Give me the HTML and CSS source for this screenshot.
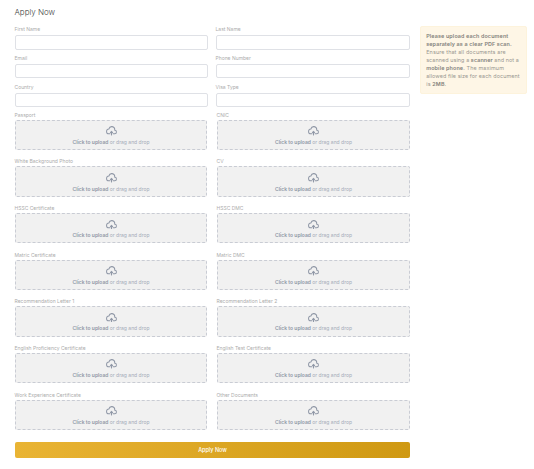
FILE: index.html
```
<!DOCTYPE html>
<html lang="en">
<head>
<meta charset="utf-8">
<title>Apply Now</title>
<link rel="stylesheet" href="styles.css">
</head>
<body>
<main class="page">
  <form class="form">
    <h1 class="title">Apply Now</h1>
    <div class="fields" id="fields"></div>
    <div class="uploads" id="uploads"></div>
    <button class="submit" type="button">Apply Now</button>
  </form>
  <aside class="note"><b>Please upload each document<br>separately as a clear PDF scan.</b><br>Ensure that all documents are<br><span class="tight">scanned using a <b>scanner</b> and not a</span><br><b>mobile phone</b>. The maximum<br><span class="tight">allowed file size for each document</span><br>is <b>2MB</b>.</aside>
</main>
<script src="script.js"></script>
</body>
</html>
```
FILE: styles.css
```
* { box-sizing: border-box; }
body {
  margin: 0;
  background: #fff;
  font-family: Inter, "Liberation Sans", sans-serif;
  font-size: 5px;
  overflow: hidden;
}
.page {
  display: flex;
  align-items: flex-start;
  gap: 10px;
  padding: 7px 7px 0 15px;
}
.form { width: 395px; }
.title {
  margin: 0 0 0 -0.5px;
  height: 19px;
  font-size: 8px;
  line-height: 11px;
  font-weight: 300;
  letter-spacing: -0.03px;
  color: #444;
}
.fields {
  display: grid;
  grid-template-columns: 193px 194px;
  column-gap: 8px;
  grid-template-rows: 28.6px 29px 28.6px;
}
.label {
  display: block;
  height: 7px;
  margin-left: -0.5px;
  line-height: 7px;
  color: #acacac;
  white-space: nowrap;
}
.input {
  display: block;
  width: 100%;
  height: 14.5px;
  margin-top: 2px;
  padding: 0 4px;
  border: 1px solid #dfe1e6;
  border-radius: 2px;
  background: #fff;
}
.uploads {
  display: grid;
  grid-template-columns: 192px 193px;
  column-gap: 10px;
  grid-auto-rows: 46.65px;
  margin-top: -0.5px;
}
.drop {
  display: flex;
  flex-direction: column;
  align-items: center;
  height: 30.3px;
  margin-top: 1.1px;
  padding-top: 5.5px;
  border: 1px dashed #c9ccd4;
  border-radius: 2px;
  background: #f1f1f1;
  color: #a4abb8;
  line-height: 7px;
  white-space: nowrap;
}
.cloud {
  display: block;
  width: 11px;
  height: 9.6px;
  margin-bottom: 3px;
  fill: none;
  stroke: #8f97a6;
  stroke-width: 1.8;
  stroke-linecap: round;
  stroke-linejoin: round;
}
.drop b { font-weight: 600; color: #8f97a6; }
.submit {
  display: block;
  width: 100%;
  height: 16px;
  margin-top: 4.3px;
  padding: 0;
  border: 0;
  border-radius: 2px;
  background: linear-gradient(90deg, #e9b434, #cf9913);
  color: #fff;
  font: 500 5.5px/16px Inter, "Liberation Sans", sans-serif;
}
.note {
  width: 107px;
  height: 68px;
  margin-top: 19px;
  padding: 5px 0 0 5.2px;
  border: 1px solid #fdf3dc;
  border-radius: 2px;
  background: #fef6e6;
  color: #999791;
  font-size: 5.4px;
  line-height: 8px;
  letter-spacing: 0.14px;
  white-space: nowrap;
}
.note b { font-weight: 600; color: #84827c; }
.tight { letter-spacing: 0.09px; }
```
FILE: script.js
```
const fields = ["First Name", "Last Name", "Email", "Phone Number", "Country", "Visa Type"];
const uploads = [
  "Passport", "CNIC", "White Background Photo", "CV", "HSSC Certificate", "HSSC DMC",
  "Matric Certificate", "Matric DMC", "Recommendation Letter 1", "Recommendation Letter 2",
  "English Proficiency Certificate", "English Test Certificate", "Work Experience Certificate", "Other Documents"
];
document.getElementById("fields").innerHTML = fields.map(name =>
  `<label><span class="label">${name}</span><input class="input" type="text"></label>`).join("");
document.getElementById("uploads").innerHTML = uploads.map(name =>
  `<div><span class="label">${name}</span><div class="drop">
    <svg class="cloud" viewBox="0 0 20 16" preserveAspectRatio="none"><path d="M13 13h3a3 3 0 0 0 0-6h-.025A5.56 5.56 0 0 0 16 6.5 5.5 5.5 0 0 0 5.207 5.021C5.137 5.017 5.071 5 5 5a4 4 0 0 0 0 8h2.167M10 15V9m0 0L8 11m2-2 2 2"/></svg>
    <div><b>Click to upload</b> or drag and drop</div></div></div>`).join("");
```
